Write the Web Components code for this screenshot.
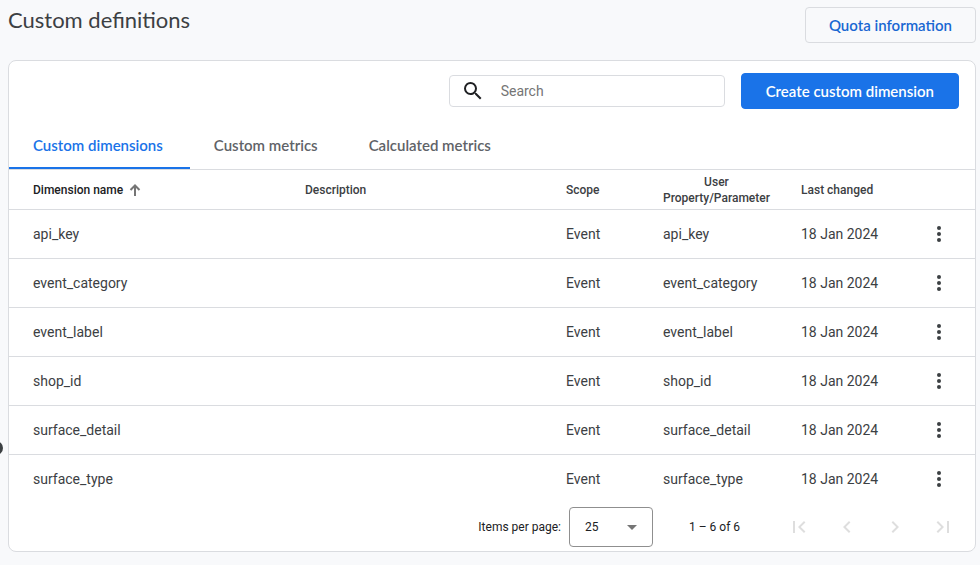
<!DOCTYPE html>
<html lang="en">
<head>
<meta charset="utf-8">
<meta name="viewport" content="width=device-width, initial-scale=1">
<title>Custom definitions</title>
<style>
    body {
        margin: 0;
        background: #f8f9fb;
        color: #3c4043;
        font-family: Roboto, "Liberation Sans", sans-serif;
        font-size: 14px;
        --display-font: Lato, "Open Sans", sans-serif;
        --line: #dadce0;
        --blue: #1a73e8;
    }
</style>
</head>
<body>
<page-shell>
    <page-header>
        <span slot="title">Custom definitions</span>
        <action-button slot="actions">Quota information</action-button>
    </page-header>
    <content-card>
        <card-toolbar>
            <search-field label="Search"></search-field>
            <action-button variant="primary">Create custom dimension</action-button>
        </card-toolbar>
        <tab-bar tabs="Custom dimensions,Custom metrics,Calculated metrics"></tab-bar>
        <definitions-table></definitions-table>
        <table-paginator></table-paginator>
    </content-card>
</page-shell>

<script>
class PageShell extends HTMLElement {
    connectedCallback() {
        this.attachShadow({ mode: 'open' });
        this.shadowRoot.innerHTML = `
            <style>
                :host {
                    display: block;
                    position: relative;
                    overflow: hidden;
                    padding: 0 4px 12px 8px;
                }
                /* drag handle of the collapsed side panel */
                .handle {
                    position: absolute;
                    left: -11px;
                    top: 441px;
                    width: 14px;
                    height: 14px;
                    border-radius: 50%;
                    background: #3c4043;
                }
            </style>
            <div class="handle"></div>
            <slot></slot>
        `;
    }
}

class PageHeader extends HTMLElement {
    connectedCallback() {
        this.attachShadow({ mode: 'open' });
        this.shadowRoot.innerHTML = `
            <style>
                :host {
                    display: flex;
                    justify-content: space-between;
                    align-items: flex-start;
                    padding: 7px 0 17px;
                }
                h1 {
                    margin: 0;
                    font: 400 22px/26px var(--display-font);
                    color: #3c4043;
                }
            </style>
            <h1><slot name="title"></slot></h1>
            <slot name="actions"></slot>
        `;
    }
}

class ActionButton extends HTMLElement {
    connectedCallback() {
        this.attachShadow({ mode: 'open' });
        this.shadowRoot.innerHTML = `
            <style>
                :host {
                    display: block;
                }
                button {
                    box-sizing: border-box;
                    height: 36px;
                    padding: 0 23px;
                    border: 1px solid var(--line);
                    border-radius: 4px;
                    background: transparent;
                    color: #1967d2;
                    font: 600 15px/20px var(--display-font);
                    white-space: nowrap;
                    cursor: pointer;
                }
                :host([variant="primary"]) button {
                    padding: 0 24px;
                    border-color: var(--blue);
                    background: var(--blue);
                    color: #fff;
                }
            </style>
            <button type="button"><slot></slot></button>
        `;
    }
}

class ContentCard extends HTMLElement {
    connectedCallback() {
        this.attachShadow({ mode: 'open' });
        this.shadowRoot.innerHTML = `
            <style>
                :host {
                    display: block;
                    border: 1px solid var(--line);
                    border-radius: 8px;
                    background: #fff;
                    overflow: hidden;
                }
            </style>
            <slot></slot>
        `;
    }
}

class CardToolbar extends HTMLElement {
    connectedCallback() {
        this.attachShadow({ mode: 'open' });
        this.shadowRoot.innerHTML = `
            <style>
                :host {
                    display: flex;
                    justify-content: flex-end;
                    align-items: center;
                    gap: 16px;
                    padding: 12px 16px;
                }
            </style>
            <slot></slot>
        `;
    }
}

class SearchField extends HTMLElement {
    connectedCallback() {
        const label = this.getAttribute('label');
        this.attachShadow({ mode: 'open' });
        this.shadowRoot.innerHTML = `
            <style>
                :host {
                    display: block;
                    width: 276px;
                }
                label {
                    box-sizing: border-box;
                    display: flex;
                    align-items: center;
                    gap: 16px;
                    height: 32px;
                    padding: 0 11px;
                    border: 1px solid var(--line);
                    border-radius: 4px;
                }
                svg {
                    flex: none;
                    fill: #202124;
                }
                input {
                    flex: 1;
                    min-width: 0;
                    padding: 0;
                    border: 0;
                    outline: none;
                    background: none;
                    color: #3c4043;
                    font: 400 14px/20px Roboto, sans-serif;
                }
                input::placeholder {
                    color: #757575;
                    opacity: 1;
                }
            </style>
            <label>
                <svg width="24" height="24" viewBox="0 0 24 24" aria-hidden="true">
                    <path d="M15.5 14h-.79l-.28-.27A6.47 6.47 0 0 0 16 9.5 6.5 6.5 0 1 0 9.5 16c1.61 0 3.09-.59 4.23-1.57l.27.28v.79l5 4.99L20.49 19l-4.99-5zm-6 0C7.01 14 5 11.99 5 9.5S7.01 5 9.5 5 14 7.01 14 9.5 11.99 14 9.5 14z"/>
                </svg>
                <input type="text" placeholder="${label}" aria-label="${label}">
            </label>
        `;
    }
}

class TabBar extends HTMLElement {
    connectedCallback() {
        const tabs = this.getAttribute('tabs').split(',');
        this.attachShadow({ mode: 'open' });
        this.shadowRoot.innerHTML = `
            <style>
                :host {
                    display: block;
                    border-bottom: 1px solid var(--line);
                }
                div {
                    display: flex;
                }
                button {
                    height: 48px;
                    padding: 2px 27px 0 24px;
                    border: 0;
                    border-bottom: 2px solid transparent;
                    background: none;
                    color: #5f6368;
                    font: 600 15px/20px var(--display-font);
                    cursor: pointer;
                }
                button[aria-selected="true"] {
                    border-bottom-color: var(--blue);
                    color: var(--blue);
                }
            </style>
            <div role="tablist">
                ${tabs.map((tab, i) => `<button type="button" role="tab" aria-selected="${i === 0}">${tab}</button>`).join('')}
            </div>
        `;
        const buttons = this.shadowRoot.querySelectorAll('button');
        buttons.forEach(button => {
            button.addEventListener('click', () => {
                buttons.forEach(b => b.setAttribute('aria-selected', b === button));
            });
        });
    }
}

const definitions = ['api_key', 'event_category', 'event_label', 'shop_id', 'surface_detail', 'surface_type']
    .map(name => ({ name, description: '', scope: 'Event', parameter: name, changed: '18 Jan 2024' }));

class DefinitionsTable extends HTMLElement {
    connectedCallback() {
        this.attachShadow({ mode: 'open' });
        this.shadowRoot.innerHTML = `
            <style>
                :host {
                    display: block;
                }
                table {
                    width: 100%;
                    table-layout: fixed;
                    border-spacing: 0;
                }
                .name { width: 272px; }
                .scope { width: 97px; }
                .parameter, .changed { width: 138px; }
                .menu { width: 60px; }
                th, td {
                    box-sizing: border-box;
                    padding: 0 0 0 24px;
                    border-bottom: 1px solid var(--line);
                    text-align: left;
                    white-space: nowrap;
                }
                th {
                    height: 40px;
                    font-size: 12px;
                    line-height: 16px;
                    font-weight: 500;
                }
                th div {
                    display: flex;
                    align-items: center;
                    gap: 4px;
                    color: #202124;
                }
                th span {
                    display: inline-block;
                    text-align: center;
                }
                td {
                    height: 49px;
                    line-height: 20px;
                }
                tbody tr:last-child td {
                    border-bottom-color: transparent;
                }
                th:last-child, td:last-child {
                    padding: 0;
                }
                button {
                    display: flex;
                    align-items: center;
                    justify-content: center;
                    width: 48px;
                    height: 48px;
                    padding: 0;
                    border: 0;
                    background: none;
                    cursor: pointer;
                }
            </style>
            <table>
                <colgroup>
                    <col class="name"><col><col class="scope"><col class="parameter"><col class="changed"><col class="menu">
                </colgroup>
                <thead>
                    <tr>
                        <th aria-sort="ascending">
                            <div>
                                Dimension name
                                <svg width="16" height="16" viewBox="0 0 16 16" fill="none" stroke="#757575" stroke-width="2" aria-hidden="true">
                                    <path d="M8 14V4M3.500 8L8 3.500l4.500 4.500"/>
                                </svg>
                            </div>
                        </th>
                        <th>Description</th>
                        <th>Scope</th>
                        <th><span>User<br>Property/Parameter</span></th>
                        <th>Last changed</th>
                        <th></th>
                    </tr>
                </thead>
                <tbody>
                    ${definitions.map(d => `
                        <tr>
                            <td>${d.name}</td>
                            <td>${d.description}</td>
                            <td>${d.scope}</td>
                            <td>${d.parameter}</td>
                            <td>${d.changed}</td>
                            <td>
                                <button type="button" aria-label="More options for ${d.name}">
                                    <svg width="24" height="24" viewBox="0 0 24 24" fill="#3c4043">
                                        <circle cx="12" cy="6" r="2"/><circle cx="12" cy="12" r="2"/><circle cx="12" cy="18" r="2"/>
                                    </svg>
                                </button>
                            </td>
                        </tr>
                    `).join('')}
                </tbody>
            </table>
        `;
    }
}

const pageButtons = [
    ['First page', 'M18.41 16.59L13.82 12l4.59-4.59L17 6l-6 6 6 6zM6 6h2v12H6z'],
    ['Previous page', 'M15.41 7.41L14 6l-6 6 6 6 1.41-1.41L10.83 12z'],
    ['Next page', 'M10 6L8.59 7.41 13.17 12l-4.58 4.59L10 18l6-6z'],
    ['Last page', 'M5.59 7.41L10.18 12l-4.59 4.59L7 18l6-6-6-6zM16 6h2v12h-2z']
];

class TablePaginator extends HTMLElement {
    connectedCallback() {
        this.attachShadow({ mode: 'open' });
        this.shadowRoot.innerHTML = `
            <style>
                :host {
                    display: flex;
                    align-items: center;
                    justify-content: flex-end;
                    padding: 3px 8px 4px 0;
                    color: #202124;
                    font-size: 12px;
                    line-height: 20px;
                }
                .size {
                    display: grid;
                    align-items: center;
                    margin-left: 8px;
                }
                select, .size svg {
                    grid-area: 1 / 1;
                }
                select {
                    appearance: none;
                    box-sizing: border-box;
                    width: 84px;
                    height: 40px;
                    padding: 0 15px;
                    border: 1px solid #8f8f8f;
                    border-radius: 4px;
                    background: #fff;
                    color: inherit;
                    font: inherit;
                }
                .size svg {
                    justify-self: end;
                    margin-right: 16px;
                    pointer-events: none;
                }
                .range {
                    min-width: 54px;
                    margin: 0 32px 0 36px;
                }
                button {
                    display: flex;
                    align-items: center;
                    justify-content: center;
                    width: 48px;
                    height: 40px;
                    padding: 0;
                    border: 0;
                    background: none;
                }
            </style>
            <label for="size">Items per page:</label>
            <div class="size">
                <select id="size">
                    <option>10</option>
                    <option selected>25</option>
                    <option>50</option>
                    <option>100</option>
                </select>
                <svg width="10" height="5" viewBox="0 0 10 5" fill="#757575" aria-hidden="true">
                    <path d="M0 0h10L5 5z"/>
                </svg>
            </div>
            <div class="range">1 – 6 of 6</div>
            ${pageButtons.map(([label, path]) => `
                <button type="button" aria-label="${label}" disabled>
                    <svg width="24" height="24" viewBox="0 0 24 24" fill="#dedede"><path d="${path}"/></svg>
                </button>
            `).join('')}
        `;
    }
}

customElements.define('page-shell', PageShell);
customElements.define('page-header', PageHeader);
customElements.define('action-button', ActionButton);
customElements.define('content-card', ContentCard);
customElements.define('card-toolbar', CardToolbar);
customElements.define('search-field', SearchField);
customElements.define('tab-bar', TabBar);
customElements.define('definitions-table', DefinitionsTable);
customElements.define('table-paginator', TablePaginator);
</script>
</body>
</html>
